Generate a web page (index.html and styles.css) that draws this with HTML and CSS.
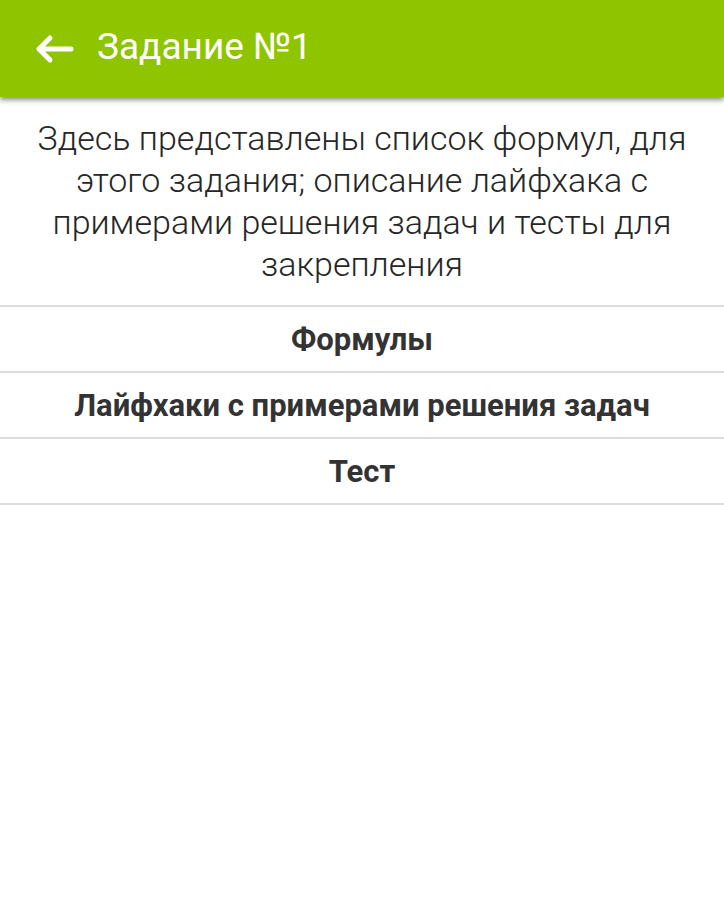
FILE: index.html
```html
<!DOCTYPE html>
<html lang="ru">
<head>
<meta charset="utf-8">
<title>Задание №1</title>
<link rel="stylesheet" href="styles.css">
</head>
<body>
<header class="appbar">
  <svg class="back" width="40" height="30" viewBox="0 0 40 30" aria-hidden="true">
    <path d="M37 15 H5 M16 4 L5 15 L16 26" fill="none" stroke="#fff" stroke-width="5" stroke-linecap="round" stroke-linejoin="round"/>
  </svg>
  <h1 class="title">Задание №1</h1>
</header>
<p class="intro">Здесь представлены список формул, для этого задания; описание лайфхака с примерами решения задач и тесты для закрепления</p>
<nav class="menu">
  <div class="item">Формулы</div>
  <div class="item">Лайфхаки с примерами решения задач</div>
  <div class="item">Тест</div>
</nav>
</body>
</html>
```
FILE: styles.css
```css
html, body {
  margin: 0;
  padding: 0;
  background: #fff;
  font-family: Roboto, "Liberation Sans", sans-serif;
}
.appbar {
  height: 97px;
  box-sizing: border-box;
  padding-bottom: 4px;
  background: #8ec400;
  display: flex;
  align-items: center;
  padding-left: 34px;
  box-shadow: 0 3px 5px rgba(40, 50, 70, 0.55);
  position: relative;
  z-index: 1;
}
.back {
  display: block;
  margin-right: 23px;
  margin-top: 4px;
}
.title {
  margin: 0;
  color: #fff;
  font-size: 37px;
  font-weight: 400;
}
.intro {
  margin: 0;
  padding: 20px 20px 20px;
  text-align: center;
  font-size: 34px;
  line-height: 42px;
  font-weight: 300;
  color: #262626;
  border-bottom: 2px solid #dcdcdc;
}
.menu {
  display: flex;
  flex-direction: column;
}
.item {
  height: 64px;
  display: flex;
  align-items: center;
  justify-content: center;
  font-size: 31px;
  font-weight: 700;
  color: #333;
  border-bottom: 2px solid #dcdcdc;
}
```
